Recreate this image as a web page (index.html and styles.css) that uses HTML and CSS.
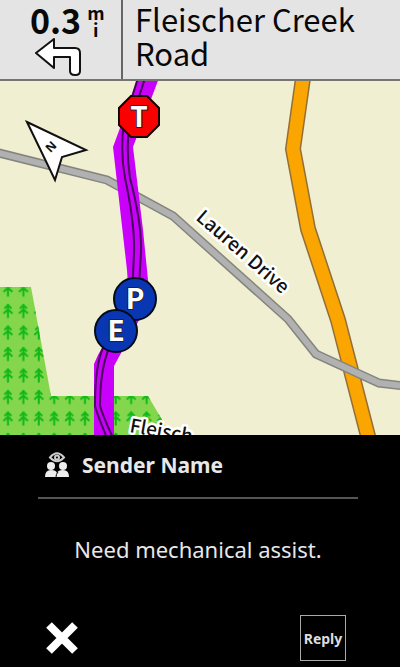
FILE: index.html
```
<!DOCTYPE html>
<html lang="en">
<head>
    <meta charset="UTF-8">
    <meta name="viewport" content="width=device-width, initial-scale=1.0">
    <title>Navigation</title>
    <link rel="stylesheet" href="styles.css">
</head>
<body>
    <header class="turn-bar">
        <div class="next-turn">
            <div class="distance">
                <span class="value">0.3</span>
                <span class="unit"><span>m</span><span>i</span></span>
            </div>
            <svg class="turn-arrow" viewBox="0 0 50 40" role="img" aria-label="Turn left">
                <path d="M2 15 L20 1 V10 H41 Q46 10 46 15 V33 Q46 37 41.500 37 H41 Q36 37 36 33 V19 H20 V30 Z"/>
            </svg>
        </div>
        <h1 class="road-name">Fleischer Creek Road</h1>
    </header>

    <main class="map">
        <svg class="map-canvas" viewBox="0 81 400 354" preserveAspectRatio="xMidYMid slice" role="img" aria-label="Map">
            <defs>
                <pattern id="trees" x="0.500" y="300" width="15.400" height="21.500" patternUnits="userSpaceOnUse">
                    <path class="tree" d="M7.500 4 V18 M4 8.500 L7.500 5 L11 8.500 M3 13.500 L7.500 9.500 L12 13.500"/>
                </pattern>
            </defs>
            <rect class="land" y="81" width="400" height="354"/>
            <path class="forest" d="M0 287 H31 L51 396 H148 L171 435 H0 Z"/>
            <path fill="url(#trees)" d="M0 287 H31 L51 396 H148 L171 435 H0 Z"/>

            <!-- highway -->
            <path class="highway-edge" d="M303 78 L293 149 L308 229 L338 320 L369 440"/>
            <path class="highway" d="M303 78 L293 149 L308 229 L338 320 L369 440"/>

            <!-- Lauren Drive -->
            <path class="street-edge" d="M-5 152 L107 180 L173 216 L288 319 L316 354 L379 383 L405 386"/>
            <path class="street" d="M-5 152 L107 180 L173 216 L288 319 L316 354 L379 383 L405 386"/>

            <!-- active route -->
            <path class="route" d="M138 78 L132 96 L120 128 L113 147 L127 270 L129 300 L98 355 L94 364 V438 H114 V366 L150 300 L143 230 L133 147 L159 78 Z"/>
            <path class="lane" d="M138 78 L124 122 Q120 151 125 178 Q135 225 134 252 L132 300 L103 348 Q95 365 95 406 Q97 414 107 438"/>
            <path class="lane" d="M145 78 L129 128 Q126 151 130 178 Q142 224 141 252 L138 303 L109 348 Q100 370 100 406 Q103 416 113 438"/>

            <text class="street-name" transform="translate(195 219) rotate(41)">Lauren Drive</text>
            <text class="street-name" transform="translate(129 432) rotate(10)">Fleisch</text>

            <!-- north pointer -->
            <path class="north" d="M27 122 L86 150 L62 157 L55 180 Z"/>
            <text class="north-label" transform="translate(51 147) rotate(-45)" y="4">N</text>

            <!-- markers -->
            <path class="stop" d="M131 96 H147 L159 108 V125 L147 137 H131 L119 125 V108 Z"/>
            <text class="marker-label" x="139" y="127">T</text>
            <circle class="rider" cx="135" cy="299" r="21"/>
            <text class="marker-label" x="135" y="309">P</text>
            <circle class="rider" cx="116" cy="331" r="21"/>
            <text class="marker-label" x="116" y="341">E</text>
        </svg>
    </main>

    <section class="message">
        <div class="sender">
            <svg class="group-icon" viewBox="0 0 26 26" aria-hidden="true">
                <path class="eye" d="M6 5.500 Q13 -3 20 5.500 Q13 13 6 5.500 Z"/>
                <circle class="eye" cx="13" cy="5.500" r="2"/>
                <circle cx="7" cy="14" r="4"/>
                <circle cx="19" cy="14" r="4"/>
                <path d="M1 25 Q1 18 7 18 Q12 18 13 21 Q14 18 19 18 Q25 18 25 25 Z"/>
                <path class="gap" d="M12 25 Q12 22 14 20"/>
            </svg>
            <h2>Sender Name</h2>
        </div>
        <p>Need mechanical assist.</p>
        <div class="actions">
            <button class="close" aria-label="Close">
                <svg viewBox="0 0 32 32" aria-hidden="true">
                    <path d="M3 3 L29 29 M29 3 L3 29"/>
                </svg>
            </button>
            <button class="reply">Reply</button>
        </div>
    </section>
</body>
</html>
```
FILE: styles.css
```
* {
    box-sizing: border-box;
}
body {
    font-family: "Noto Sans", "Open Sans", sans-serif;
    background-color: #000;
    display: flex;
    flex-direction: column;
    min-height: 100vh;
    margin: 0;
}
h1, h2, p {
    margin: 0;
}
.turn-bar {
    display: flex;
    background-color: #e4e4e4;
    border-bottom: 2px solid #77756f;
    font-family: "Noto Sans CJK SC", "Noto Sans", sans-serif;
    color: #080808;
}
.next-turn {
    width: 123px;
    padding: 0 0 1px 30px;
    border-right: 2px solid #666;
}
.distance {
    display: flex;
    gap: 6px;
    height: 38px;
    font-weight: bold;
}
.value {
    font-size: 34px;
    line-height: 40px;
}
.unit {
    display: flex;
    flex-direction: column;
    align-items: center;
    padding-top: 4px;
    font-size: 18px;
    line-height: 17px;
}
.turn-arrow {
    display: block;
    width: 50px;
    height: 40px;
    margin-left: 4px;
    fill: #fff;
    stroke: #111;
    stroke-width: 2;
    stroke-linejoin: round;
}
.road-name {
    flex: 1;
    padding: 2px 12px 0;
    font-size: 31px;
    font-weight: normal;
    line-height: 34px;
}
.map {
    flex: 1;
    min-height: 200px;
    display: flex;
}
.map-canvas {
    flex: 1;
    width: 100%;
    height: auto;
    fill: none;
}
.map-canvas .land {
    fill: #f0efd1;
}
.map-canvas .forest {
    fill: #84d64c;
}
.tree {
    stroke: #10b818;
    stroke-width: 2;
}
.highway-edge {
    stroke: #936f35;
    stroke-width: 16;
}
.highway {
    stroke: #faa500;
    stroke-width: 13;
}
.street-edge {
    stroke: #85857f;
    stroke-width: 9;
}
.street {
    stroke: #b1b1b1;
    stroke-width: 6;
}
.route {
    fill: #c900fa;
}
.lane {
    stroke: #4a005c;
    stroke-width: 2;
}
.street-name {
    fill: #111;
    stroke: #fff;
    stroke-width: 5;
    stroke-linejoin: round;
    paint-order: stroke;
    font-family: "Noto Sans CJK SC", "Noto Sans", sans-serif;
    font-size: 19px;
    font-weight: 500;
}
.north {
    fill: #fff;
    stroke: #111;
    stroke-width: 2;
}
.north-label {
    fill: #111;
    font-size: 12px;
    font-weight: bold;
    text-anchor: middle;
}
.stop {
    fill: #fa0000;
    stroke: #160000;
    stroke-width: 2;
}
.rider {
    fill: #0937b4;
    stroke: #050a18;
    stroke-width: 2;
}
.marker-label {
    fill: #fff;
    stroke: #222;
    stroke-width: 2;
    paint-order: stroke;
    font-family: "Noto Sans CJK SC", "Noto Sans", sans-serif;
    font-size: 28px;
    font-weight: bold;
    text-anchor: middle;
}
.message {
    padding: 12px 42px 6px 38px;
    color: #e8e8e8;
    font-size: 22px;
    line-height: 36px;
}
.sender {
    display: flex;
    align-items: center;
    gap: 12px;
    padding: 0 6px 14px;
    border-bottom: 2px solid #555;
}
.sender h2 {
    font-size: 21px;
    line-height: 36px;
}
.group-icon {
    width: 26px;
    height: 26px;
    fill: #eee;
}
.eye {
    fill: none;
    stroke: #ccc;
    stroke-width: 2;
}
.gap {
    fill: none;
    stroke: #000;
    stroke-width: 1;
}
.message p {
    padding: 32px 0 48px;
    text-align: center;
}
.actions {
    display: flex;
    justify-content: space-between;
    align-items: center;
    padding: 0 12px 0 8px;
}
button {
    padding: 0;
    border: none;
    background: none;
    color: #ddd;
    font-family: inherit;
    cursor: pointer;
}
.close {
    width: 32px;
    height: 32px;
}
.close svg {
    display: block;
    stroke: #fff;
    stroke-width: 8;
}
.reply {
    width: 46px;
    height: 46px;
    border: 1px solid #aaa;
    font-size: 14px;
    font-weight: bold;
}
```
